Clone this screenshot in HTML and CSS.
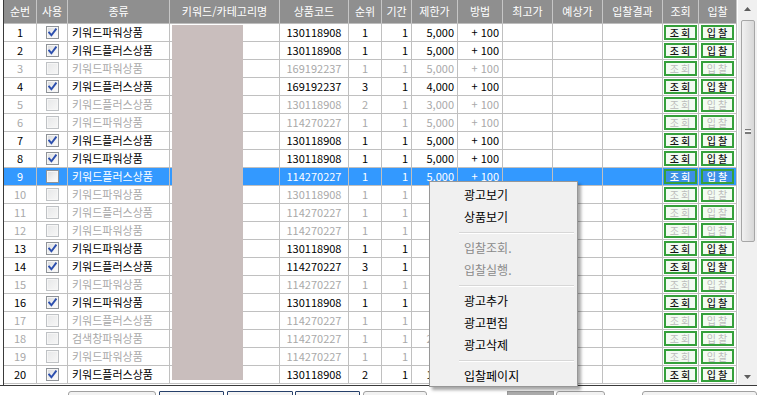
FILE: index.html
```html
<!DOCTYPE html>
<html lang="ko">
<head>
<meta charset="utf-8">
<title>입찰 목록</title>
<link rel="stylesheet" href="styles.css">
</head>
<body>
<div class="app">
  <div class="main">
    <div class="grid">
      <div class="row head">
        <span class="c">순번</span><span class="c">사용</span><span class="c">종류</span><span class="c">키워드/카테고리명</span><span class="c">상품코드</span><span class="c">순위</span><span class="c">기간</span><span class="c">제한가</span><span class="c">방법</span><span class="c">최고가</span><span class="c">예상가</span><span class="c">입찰결과</span><span class="c">조회</span><span class="c">입찰</span>
      </div>

      <div class="row"><span class="c ctr">1</span><span class="c ctr"><i class="cb on"><svg viewBox="0 0 9 9"><path d="M1.2 4.6 L3.4 7.2 L7.8 1.4"/></svg></i></span><span class="c kind">키워드파워상품</span><span class="c"></span><span class="c ctr">130118908</span><span class="c ctr">1</span><span class="c rt">1</span><span class="c rt">5,000</span><span class="c rt">+ 100</span><span class="c"></span><span class="c"></span><span class="c"></span><span class="c btn"><b>조회</b></span><span class="c btn"><b>입찰</b></span></div>
      <div class="row"><span class="c ctr">2</span><span class="c ctr"><i class="cb on"><svg viewBox="0 0 9 9"><path d="M1.2 4.6 L3.4 7.2 L7.8 1.4"/></svg></i></span><span class="c kind">키워드플러스상품</span><span class="c"></span><span class="c ctr">130118908</span><span class="c ctr">1</span><span class="c rt">1</span><span class="c rt">5,000</span><span class="c rt">+ 100</span><span class="c"></span><span class="c"></span><span class="c"></span><span class="c btn"><b>조회</b></span><span class="c btn"><b>입찰</b></span></div>
      <div class="row off"><span class="c ctr">3</span><span class="c ctr"><i class="cb"></i></span><span class="c kind">키워드파워상품</span><span class="c"></span><span class="c ctr">169192237</span><span class="c ctr">1</span><span class="c rt">1</span><span class="c rt">5,000</span><span class="c rt">+ 100</span><span class="c"></span><span class="c"></span><span class="c"></span><span class="c btn"><b>조회</b></span><span class="c btn"><b>입찰</b></span></div>
      <div class="row"><span class="c ctr">4</span><span class="c ctr"><i class="cb on"><svg viewBox="0 0 9 9"><path d="M1.2 4.6 L3.4 7.2 L7.8 1.4"/></svg></i></span><span class="c kind">키워드플러스상품</span><span class="c"></span><span class="c ctr">169192237</span><span class="c ctr">3</span><span class="c rt">1</span><span class="c rt">4,000</span><span class="c rt">+ 100</span><span class="c"></span><span class="c"></span><span class="c"></span><span class="c btn"><b>조회</b></span><span class="c btn"><b>입찰</b></span></div>
      <div class="row off"><span class="c ctr">5</span><span class="c ctr"><i class="cb"></i></span><span class="c kind">키워드플러스상품</span><span class="c"></span><span class="c ctr">130118908</span><span class="c ctr">2</span><span class="c rt">1</span><span class="c rt">3,000</span><span class="c rt">+ 100</span><span class="c"></span><span class="c"></span><span class="c"></span><span class="c btn"><b>조회</b></span><span class="c btn"><b>입찰</b></span></div>
      <div class="row off"><span class="c ctr">6</span><span class="c ctr"><i class="cb"></i></span><span class="c kind">키워드파워상품</span><span class="c"></span><span class="c ctr">114270227</span><span class="c ctr">1</span><span class="c rt">1</span><span class="c rt">5,000</span><span class="c rt">+ 100</span><span class="c"></span><span class="c"></span><span class="c"></span><span class="c btn"><b>조회</b></span><span class="c btn"><b>입찰</b></span></div>
      <div class="row"><span class="c ctr">7</span><span class="c ctr"><i class="cb on"><svg viewBox="0 0 9 9"><path d="M1.2 4.6 L3.4 7.2 L7.8 1.4"/></svg></i></span><span class="c kind">키워드플러스상품</span><span class="c"></span><span class="c ctr">130118908</span><span class="c ctr">1</span><span class="c rt">1</span><span class="c rt">5,000</span><span class="c rt">+ 100</span><span class="c"></span><span class="c"></span><span class="c"></span><span class="c btn"><b>조회</b></span><span class="c btn"><b>입찰</b></span></div>
      <div class="row"><span class="c ctr">8</span><span class="c ctr"><i class="cb on"><svg viewBox="0 0 9 9"><path d="M1.2 4.6 L3.4 7.2 L7.8 1.4"/></svg></i></span><span class="c kind">키워드파워상품</span><span class="c"></span><span class="c ctr">130118908</span><span class="c ctr">1</span><span class="c rt">1</span><span class="c rt">5,000</span><span class="c rt">+ 100</span><span class="c"></span><span class="c"></span><span class="c"></span><span class="c btn"><b>조회</b></span><span class="c btn"><b>입찰</b></span></div>
      <div class="row sel"><span class="c ctr">9</span><span class="c ctr"><i class="cb"></i></span><span class="c kind">키워드플러스상품</span><span class="c"></span><span class="c ctr">114270227</span><span class="c ctr">1</span><span class="c rt">1</span><span class="c rt">5,000</span><span class="c rt">+ 100</span><span class="c"></span><span class="c"></span><span class="c"></span><span class="c btn"><b>조회</b></span><span class="c btn"><b>입찰</b></span></div>
      <div class="row off"><span class="c ctr">10</span><span class="c ctr"><i class="cb"></i></span><span class="c kind">키워드파워상품</span><span class="c"></span><span class="c ctr">130118908</span><span class="c ctr">1</span><span class="c rt">1</span><span class="c rt"></span><span class="c rt"></span><span class="c"></span><span class="c"></span><span class="c"></span><span class="c btn"><b>조회</b></span><span class="c btn"><b>입찰</b></span></div>
      <div class="row off"><span class="c ctr">11</span><span class="c ctr"><i class="cb"></i></span><span class="c kind">키워드플러스상품</span><span class="c"></span><span class="c ctr">114270227</span><span class="c ctr">1</span><span class="c rt">1</span><span class="c rt"></span><span class="c rt"></span><span class="c"></span><span class="c"></span><span class="c"></span><span class="c btn"><b>조회</b></span><span class="c btn"><b>입찰</b></span></div>
      <div class="row off"><span class="c ctr">12</span><span class="c ctr"><i class="cb"></i></span><span class="c kind">키워드파워상품</span><span class="c"></span><span class="c ctr">114270227</span><span class="c ctr">1</span><span class="c rt">1</span><span class="c rt"></span><span class="c rt"></span><span class="c"></span><span class="c"></span><span class="c"></span><span class="c btn"><b>조회</b></span><span class="c btn"><b>입찰</b></span></div>
      <div class="row"><span class="c ctr">13</span><span class="c ctr"><i class="cb on"><svg viewBox="0 0 9 9"><path d="M1.2 4.6 L3.4 7.2 L7.8 1.4"/></svg></i></span><span class="c kind">키워드파워상품</span><span class="c"></span><span class="c ctr">130118908</span><span class="c ctr">1</span><span class="c rt">1</span><span class="c rt"></span><span class="c rt"></span><span class="c"></span><span class="c"></span><span class="c"></span><span class="c btn"><b>조회</b></span><span class="c btn"><b>입찰</b></span></div>
      <div class="row"><span class="c ctr">14</span><span class="c ctr"><i class="cb on"><svg viewBox="0 0 9 9"><path d="M1.2 4.6 L3.4 7.2 L7.8 1.4"/></svg></i></span><span class="c kind">키워드플러스상품</span><span class="c"></span><span class="c ctr">114270227</span><span class="c ctr">3</span><span class="c rt">1</span><span class="c rt"></span><span class="c rt"></span><span class="c"></span><span class="c"></span><span class="c"></span><span class="c btn"><b>조회</b></span><span class="c btn"><b>입찰</b></span></div>
      <div class="row off"><span class="c ctr">15</span><span class="c ctr"><i class="cb"></i></span><span class="c kind">키워드파워상품</span><span class="c"></span><span class="c ctr">114270227</span><span class="c ctr">1</span><span class="c rt">1</span><span class="c rt"></span><span class="c rt"></span><span class="c"></span><span class="c"></span><span class="c"></span><span class="c btn"><b>조회</b></span><span class="c btn"><b>입찰</b></span></div>
      <div class="row"><span class="c ctr">16</span><span class="c ctr"><i class="cb on"><svg viewBox="0 0 9 9"><path d="M1.2 4.6 L3.4 7.2 L7.8 1.4"/></svg></i></span><span class="c kind">키워드파워상품</span><span class="c"></span><span class="c ctr">130118908</span><span class="c ctr">1</span><span class="c rt">1</span><span class="c rt"></span><span class="c rt"></span><span class="c"></span><span class="c"></span><span class="c"></span><span class="c btn"><b>조회</b></span><span class="c btn"><b>입찰</b></span></div>
      <div class="row off"><span class="c ctr">17</span><span class="c ctr"><i class="cb"></i></span><span class="c kind">키워드플러스상품</span><span class="c"></span><span class="c ctr">114270227</span><span class="c ctr">1</span><span class="c rt">1</span><span class="c rt"></span><span class="c rt"></span><span class="c"></span><span class="c"></span><span class="c"></span><span class="c btn"><b>조회</b></span><span class="c btn"><b>입찰</b></span></div>
      <div class="row off"><span class="c ctr">18</span><span class="c ctr"><i class="cb"></i></span><span class="c kind">검색창파워상품</span><span class="c"></span><span class="c ctr">114270227</span><span class="c ctr">1</span><span class="c rt">1</span><span class="c rt">2,000</span><span class="c rt"></span><span class="c"></span><span class="c"></span><span class="c"></span><span class="c btn"><b>조회</b></span><span class="c btn"><b>입찰</b></span></div>
      <div class="row off"><span class="c ctr">19</span><span class="c ctr"><i class="cb"></i></span><span class="c kind">키워드파워상품</span><span class="c"></span><span class="c ctr">114270227</span><span class="c ctr">1</span><span class="c rt">1</span><span class="c rt"></span><span class="c rt"></span><span class="c"></span><span class="c"></span><span class="c"></span><span class="c btn"><b>조회</b></span><span class="c btn"><b>입찰</b></span></div>
      <div class="row"><span class="c ctr">20</span><span class="c ctr"><i class="cb on"><svg viewBox="0 0 9 9"><path d="M1.2 4.6 L3.4 7.2 L7.8 1.4"/></svg></i></span><span class="c kind">키워드플러스상품</span><span class="c"></span><span class="c ctr">130118908</span><span class="c ctr">2</span><span class="c rt">1</span><span class="c rt">1,000</span><span class="c rt"></span><span class="c"></span><span class="c"></span><span class="c"></span><span class="c btn"><b>조회</b></span><span class="c btn"><b>입찰</b></span></div>

      <div class="mask"></div>
    </div>

    <div class="vscroll">
      <div class="arrow"><svg width="7" height="4" viewBox="0 0 7 4"><path d="M0 4 L3.5 0 L7 4Z"/></svg></div>
      <div class="track">
        <div class="thumb"><span class="grip"></span></div>
      </div>
      <div class="arrow"><svg width="7" height="4" viewBox="0 0 7 4"><path d="M0 0 L3.5 4 L7 0Z"/></svg></div>
    </div>
  </div>

  <div class="bottombar">
    <span class="bb w88 soft"></span>
    <span class="bb w66 dark"></span>
    <span class="bb w66 dark"></span>
    <span class="bb w65 dark"></span>
    <span class="bb w64 soft"></span>
    <span class="bb w47 fill gapL"></span>
    <span class="bb w50 soft"></span>
    <span class="bb w115 soft gapM"></span>
  </div>

  <div class="menu">
    <div class="mi">광고보기</div>
    <div class="mi">상품보기</div>
    <div class="msep"></div>
    <div class="mi dis">입찰조회.</div>
    <div class="mi dis">입찰실행.</div>
    <div class="msep"></div>
    <div class="mi">광고추가</div>
    <div class="mi">광고편집</div>
    <div class="mi">광고삭제</div>
    <div class="msep"></div>
    <div class="mi">입찰페이지</div>
  </div>
</div>
</body>
</html>
```
FILE: styles.css
```css
* { box-sizing: border-box; }
html, body { margin: 0; padding: 0; background: #fff; }
body {
  font-family: "Noto Sans CJK KR", "Noto Sans", sans-serif;
  font-size: 11px;
  color: #000;
  overflow: hidden;
}
.app {
  position: relative;
  width: 757px;
  height: 395px;
  overflow: hidden;
}
.main {
  display: flex;
  height: 386px;
  padding-left: 3px;
  border-bottom: 1px solid #3a3a3a;
}
.grid {
  position: relative;
  width: 734px;
  border-left: 1px solid #3a3a3a;
}
.row {
  display: grid;
  grid-template-columns: 33px 31px 102px 110px 69px 33px 30px 46px 45px 50px 50px 60px 36px 38px;
  height: 18px;
}
.c {
  border-right: 1px solid #c0c0c0;
  border-bottom: 1px solid #c0c0c0;
  line-height: 17px;
  white-space: nowrap;
  overflow: hidden;
  display: flex;
  align-items: center;
}
.row.head { height: 24px; }
.head .c {
  background: #8f8f8f;
  color: #fff;
  justify-content: center;
  border-right: 1px solid #c6c6c6;
  border-bottom: 1px solid #bdbdbd;
  line-height: 23px;
}
.ctr { justify-content: center; }
.rt { justify-content: flex-end; padding-right: 3px; }
.kind { padding-left: 4px; }

.off .c { color: #a9a9a9; }
.sel .c { background: #3399ff; color: #fff; }

.cb {
  width: 13px;
  height: 13px;
  border: 1px solid #8f9398;
  background: linear-gradient(135deg, #d6d8db 0%, #f2f2f2 60%, #fdfdfd 100%);
  display: flex;
  align-items: center;
  justify-content: center;
  box-shadow: inset 0 0 0 1px #f6f6f6;
}
.off .cb { border-color: #bfc2c5; background: linear-gradient(135deg, #e6e7e8, #f7f7f7); }
.cb svg { width: 9px; height: 9px; }
.cb svg path { fill: none; stroke: #2c4fae; stroke-width: 1.9; stroke-linecap: square; }

.btn { justify-content: center; padding-right: 1px; }
.btn b {
  width: 33px;
  height: 15px;
  border: 2px solid #35a03b;
  background: #f3fbf2;
  color: #111;
  font-weight: 500;
  font-size: 10px;
  line-height: 11px;
  display: flex;
  align-items: center;
  justify-content: center;
  letter-spacing: 2px;
  padding-left: 2px;
}
.off .btn b { color: #bcbcbc; font-weight: 400; }
.sel .btn b { background: #3c8fe4; color: #fff; }

.mask {
  position: absolute;
  left: 168px;
  top: 25px;
  width: 71px;
  height: 355px;
  background: #c9bebd;
}

.vscroll {
  width: 19px;
  display: flex;
  flex-direction: column;
  background: #f0f0f0;
  margin-left: 1px;
}
.arrow {
  height: 17px;
  display: flex;
  align-items: center;
  justify-content: center;
}
.arrow svg path { fill: #5d5d5d; }
.track {
  flex: 1;
  padding: 3px 2px 0 3px;
}
.thumb {
  height: 222px;
  border: 1px solid #a6a6a6;
  border-radius: 2px;
  background: linear-gradient(90deg, #f1f1f1, #e4e4e4 50%, #d8d8d8);
  display: flex;
  align-items: center;
  justify-content: center;
}
.grip {
  width: 6px;
  height: 5px;
  border-top: 1px solid #7a7a7a;
  border-bottom: 1px solid #7a7a7a;
  background: linear-gradient(#fff 0 1px, #7a7a7a 1px 2px, #fff 2px);
  background-size: 100% 3px;
  background-repeat: no-repeat;
  background-position: 0 1px;
}

.bottombar {
  display: flex;
  padding: 5px 0 0 68px;
  gap: 2px;
  height: 9px;
}
.bb {
  height: 20px;
  border-radius: 3px;
  border: 1px solid #a0a0a0;
  background: #f2f2f2;
}
.bb.dark { border-color: #26406a; border-radius: 1px; background: #f4f4f4; }
.bb.fill { background: #ababab; border-color: #9a9a9a; border-radius: 0; }
.w88 { width: 88px; }
.w66 { width: 66px; margin-left: 1px; }
.w65 { width: 65px; }
.w64 { width: 64px; margin-left: 1px; }
.w47 { width: 47px; }
.w50 { width: 50px; }
.w115 { width: 115px; }
.gapL { margin-left: 78px; }
.gapM { margin-left: 35px; }

.menu {
  position: absolute;
  left: 429px;
  top: 181px;
  width: 149px;
  height: 206px;
  padding: 2px;
  background: #f0f0f0;
  border: 1px solid #979797;
  box-shadow: 3px 3px 3px rgba(0, 0, 0, 0.35);
  font-size: 12px;
}
.mi {
  height: 22px;
  line-height: 22px;
  padding-left: 32px;
  color: #000;
}
.mi.dis { color: #8a8a8a; }
.msep {
  height: 9px;
  margin-left: 27px;
  margin-right: 1px;
  display: flex;
  flex-direction: column;
  justify-content: center;
}
.msep::before {
  content: "";
  height: 1px;
  background: #d7d7d7;
  border-bottom: 1px solid #fff;
  box-sizing: content-box;
}
```
